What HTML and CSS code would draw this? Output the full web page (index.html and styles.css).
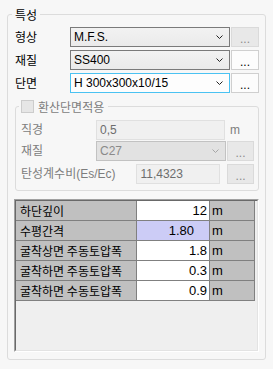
FILE: index.html
```html
<!DOCTYPE html>
<html>
<head>
<meta charset="utf-8">
<link rel="stylesheet" href="styles.css">
</head>
<body>
<fieldset class="group">
  <legend class="group-title">특성</legend>

  <div class="form-row">
    <span class="lbl">형상</span>
    <div class="combo">
      <span class="combo-text">M.F.S.</span>
      <svg class="chev" width="7" height="4" viewBox="0 0 7 4"><path d="M0.5 0.5 L3.5 3.5 L6.5 0.5" fill="none" stroke="#222" stroke-width="1"/></svg>
    </div>
    <button class="dots dots-off">...</button>
  </div>

  <div class="form-row">
    <span class="lbl">재질</span>
    <div class="combo">
      <span class="combo-text">SS400</span>
      <svg class="chev" width="7" height="4" viewBox="0 0 7 4"><path d="M0.5 0.5 L3.5 3.5 L6.5 0.5" fill="none" stroke="#222" stroke-width="1"/></svg>
    </div>
    <button class="dots">...</button>
  </div>

  <div class="form-row">
    <span class="lbl">단면</span>
    <div class="combo combo-focus">
      <span class="combo-text">H 300x300x10/15</span>
      <svg class="chev" width="7" height="4" viewBox="0 0 7 4"><path d="M0.5 0.5 L3.5 3.5 L6.5 0.5" fill="none" stroke="#222" stroke-width="1"/></svg>
    </div>
    <button class="dots">...</button>
  </div>

  <fieldset class="sub">
    <legend class="sub-title"><span class="check"></span><span class="sub-text">환산단면적용</span></legend>

    <div class="sub-row sub-row-1">
      <span class="lbl-d">직경</span>
      <div class="tbox tbox-wide">0,5</div>
      <span class="unit-d">m</span>
    </div>

    <div class="sub-row sub-row-2">
      <span class="lbl-d">재질</span>
      <div class="combo combo-off">
        <span class="combo-text">C27</span>
        <svg class="chev" width="7" height="4" viewBox="0 0 7 4"><path d="M0.5 0.5 L3.5 3.5 L6.5 0.5" fill="none" stroke="#a6a6a6" stroke-width="1"/></svg>
      </div>
      <button class="dots dots-off">...</button>
    </div>

    <div class="sub-row sub-row-3">
      <span class="lbl-d lbl-long">탄성계수비(Es/Ec)</span>
      <div class="tbox tbox-short">11,4323</div>
      <button class="dots dots-off">...</button>
    </div>
  </fieldset>

  <div class="grid">
    <div class="grid-inner">
      <div class="cells">
        <div class="c c-lbl">하단깊이</div>
        <div class="c c-val">12</div>
        <div class="c c-unit">m</div>

        <div class="c c-lbl">수평간격</div>
        <div class="c c-val c-edit">1.80</div>
        <div class="c c-unit">m</div>

        <div class="c c-lbl">굴착상면 주동토압폭</div>
        <div class="c c-val">1.8</div>
        <div class="c c-unit">m</div>

        <div class="c c-lbl">굴착하면 주동토압폭</div>
        <div class="c c-val">0.3</div>
        <div class="c c-unit">m</div>

        <div class="c c-lbl">굴착하면 수동토압폭</div>
        <div class="c c-val">0.9</div>
        <div class="c c-unit">m</div>
      </div>
    </div>
  </div>
</fieldset>
</body>
</html>
```

FILE: styles.css
```css
* { box-sizing: border-box; }
html, body { margin: 0; padding: 0; }
body {
  background: #f7f7f7;
  font-family: "Liberation Sans", "Noto Sans CJK KR", sans-serif;
  font-size: 12px;
  color: #000;
  width: 273px;
  height: 369px;
  overflow: hidden;
}

.group {
  margin: 7px 0 0 7px;
  width: 259px;
  min-inline-size: 0;
  padding: 5px 6px 7px 6px;
  border: 1px solid #dcdcdc;
  border-radius: 3px;
}
.group-title {
  margin-left: -2px;
  padding: 0 3px;
  height: 15px;
  line-height: 15px;
  font-family: "Noto Sans CJK KR", sans-serif;
  font-size: 12px;
}

.form-row {
  display: flex;
  align-items: center;
  height: 20px;
  margin-bottom: 3px;
}
.lbl {
  width: 56px;
  font-family: "Noto Sans CJK KR", sans-serif;
  font-size: 12px;
  line-height: 14px;
  padding-left: 1px;
}

.combo {
  width: 160px;
  height: 20px;
  display: flex;
  align-items: center;
  justify-content: space-between;
  padding: 0 6px 0 3px;
  border: 1px solid #7a7a7a;
  background: linear-gradient(#f2f2f2, #eaeaea);
}
.combo-focus {
  border-color: #4ac2f2;
  background: #fdfdfd;
}
.combo-text { line-height: 14px; }
.chev { display: block; margin-top: -1px; }

.dots {
  width: 28px;
  height: 20px;
  margin: 0 0 0 1px;
  padding: 4px 0 0 0;
  border: 1px solid #cfcfcf;
  background: #fcfcfc;
  font-family: "Liberation Sans", sans-serif;
  font-size: 12px;
  line-height: 14px;
  color: #000;
}
.dots-off {
  background: #e8e8e8;
  border-color: #dadada;
  color: #8c8c8c;
}

.sub {
  margin: 6px 0 0 1px;
  width: 244px;
  min-inline-size: 0;
  padding: 6px 4px 6px 5px;
  border: 1px solid #dcdcdc;
  border-radius: 3px;
}
.sub-title {
  margin-left: -2px;
  padding: 0 4px 0 2px;
  height: 15px;
  display: flex;
  align-items: center;
}
.check {
  width: 13px;
  height: 13px;
  border: 1px solid #cccccc;
  background: #e6e6e6;
  margin-right: 4px;
}
.sub-text {
  font-family: "Noto Sans CJK KR", sans-serif;
  font-size: 12px;
  line-height: 15px;
  color: #7d7d7d;
}

.sub-row {
  display: flex;
  align-items: center;
  height: 20px;
}
.sub-row-2 { margin-top: 1px; }
.sub-row-3 { margin-top: 3px; }

.lbl-d {
  width: 75px;
  color: #7d7d7d;
  font-size: 12px;
  line-height: 14px;
}
.lbl-long { width: 116px; }

.tbox {
  height: 20px;
  padding: 0 3px;
  line-height: 18px;
  border: 1px solid #e0e0e0;
  background: #f0f0f0;
  color: #6d6d6d;
}
.tbox-wide { width: 129px; }
.tbox-short { width: 84px; margin-right: 6px; }
.unit-d {
  margin-left: 5px;
  color: #7d7d7d;
}

.combo-off {
  width: 130px;
  border-color: #c2c2c2;
  background: #e2e2e2;
  color: #8a8a8a;
}
.sub-row-2 .dots,
.sub-row-3 .dots {
  width: 27px;
}

.grid {
  margin-top: 8px;
  width: 245px;
  height: 153px;
  border-top: 1px solid #a0a0a0;
  border-left: 1px solid #a0a0a0;
  border-right: 1px solid #ffffff;
  border-bottom: 1px solid #ffffff;
}
.grid-inner {
  height: 100%;
  border-top: 1px solid #696969;
  border-left: 1px solid #696969;
  border-right: 1px solid #e3e3e3;
  border-bottom: 1px solid #e3e3e3;
  background: #efefef;
}
.cells {
  display: grid;
  grid-template-columns: 121px 73px 45px;
  grid-auto-rows: 20px;
}
.c {
  border-right: 1px solid #808080;
  border-bottom: 1px solid #808080;
  font-size: 13px;
  line-height: 19px;
  white-space: nowrap;
  overflow: hidden;
}
.c-lbl {
  background: #c0c0c0;
  padding-left: 4px;
  font-family: "Noto Sans CJK KR", sans-serif;
  font-size: 12px;
}
.c-val {
  background: #ffffff;
  text-align: right;
  padding-right: 2px;
}
.c-edit {
  background: #ccccf6;
  padding-right: 15px;
}
.c-unit {
  background: #c0c0c0;
  padding-left: 2px;
}
```
